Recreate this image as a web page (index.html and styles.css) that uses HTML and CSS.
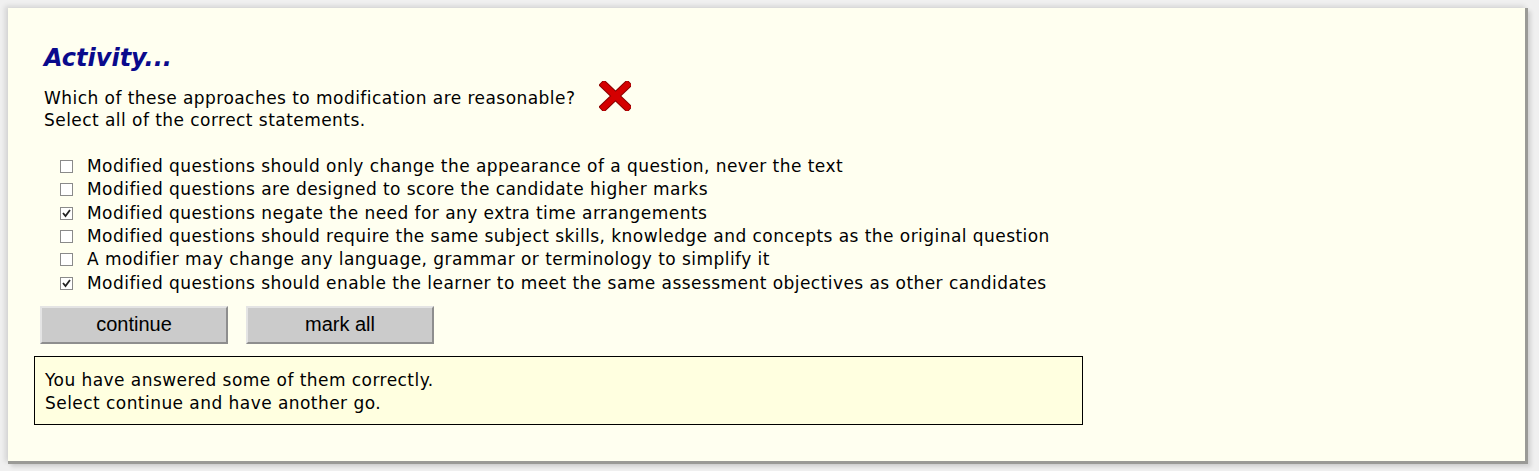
FILE: index.html
```html
<!DOCTYPE html>
<html>
<head>
<meta charset="utf-8">
<link rel="stylesheet" href="styles.css">
</head>
<body>
<div class="panel">
  <h1 class="title">Activity...</h1>
  <div class="question">
    <div class="qtext">Which of these approaches to modification are reasonable?<br>Select all of the correct statements.</div>
    <svg class="cross" width="32" height="30" viewBox="0 0 32 30">
      <path d="M5 4 L28 26 M28 4 L5 26" stroke="#8b0000" stroke-width="8" stroke-linecap="square" fill="none"/>
      <path d="M5 4 L28 26 M28 4 L5 26" stroke="#d40000" stroke-width="6" stroke-linecap="square" fill="none"/>
    </svg>
  </div>
  <ul class="options">
    <li><span class="box"></span>Modified questions should only change the appearance of a question, never the text</li>
    <li><span class="box"></span>Modified questions are designed to score the candidate higher marks</li>
    <li><span class="box checked"><svg width="11" height="11" viewBox="0 0 11 11"><path d="M2 5 L4.5 8 L9 2" stroke="#222" stroke-width="1.8" fill="none"/></svg></span>Modified questions negate the need for any extra time arrangements</li>
    <li><span class="box"></span>Modified questions should require the same subject skills, knowledge and concepts as the original question</li>
    <li><span class="box"></span>A modifier may change any language, grammar or terminology to simplify it</li>
    <li><span class="box checked"><svg width="11" height="11" viewBox="0 0 11 11"><path d="M2 5 L4.5 8 L9 2" stroke="#222" stroke-width="1.8" fill="none"/></svg></span>Modified questions should enable the learner to meet the same assessment objectives as other candidates</li>
  </ul>
  <div class="buttons">
    <button class="btn">continue</button>
    <button class="btn">mark all</button>
  </div>
  <div class="feedback">You have answered some of them correctly.<br>Select continue and have another go.</div>
</div>
</body>
</html>
```
FILE: styles.css
```css
html, body {
  margin: 0;
  padding: 0;
  background: #f0f0f0;
}
body {
  padding: 8px 10px 8px 8px;
  font-family: "DejaVu Sans", sans-serif;
  font-size: 17px;
  letter-spacing: 0.45px;
  color: #000;
}
.panel {
  background: #fffff0;
  width: 1520px;
  height: 456px;
  box-sizing: border-box;
  border-right: 3px solid #9a9a96;
  border-bottom: 3px solid #9a9a96;
  box-shadow: -3px -2px 5px rgba(0,0,0,0.12), 3px 3px 4px rgba(0,0,0,0.12);
  padding: 36px 0 0 26px;
}
.title {
  margin: 0 0 0 10px;
  font-size: 24px;
  font-style: italic;
  font-weight: bold;
  letter-spacing: 0;
  color: #0a0a8c;
  line-height: 28px;
}
.question {
  display: flex;
  align-items: flex-start;
  margin: 15px 0 0 10px;
}
.qtext {
  line-height: 22px;
}
.cross {
  margin: -6px 0 0 24px;
}
.options {
  list-style: none;
  margin: 24px 0 0 0;
  padding: 0 0 0 26px;
}
.options li {
  display: flex;
  align-items: center;
  height: 23.3px;
  line-height: 23px;
}
.box {
  width: 13px;
  height: 13px;
  box-sizing: border-box;
  border: 1px solid #8a8a8a;
  background: #fff;
  margin-right: 14px;
  display: flex;
  align-items: center;
  justify-content: center;
}
.buttons {
  display: flex;
  gap: 18px;
  margin: 11px 0 0 6px;
}
.btn {
  width: 188px;
  height: 38px;
  background: #cbcbcb;
  border: 2px solid;
  border-color: #e4e4e4 #8e8e8e #8e8e8e #e4e4e4;
  font-family: "Liberation Sans", Arial, sans-serif;
  font-size: 20px;
  letter-spacing: 0;
  color: #000;
  padding: 0;
}
.feedback {
  margin-top: 12px;
  width: 1049px;
  box-sizing: border-box;
  border: 1px solid #000;
  background: #ffffe0;
  padding: 12px 10px 9px 10px;
  line-height: 23px;
}
```
